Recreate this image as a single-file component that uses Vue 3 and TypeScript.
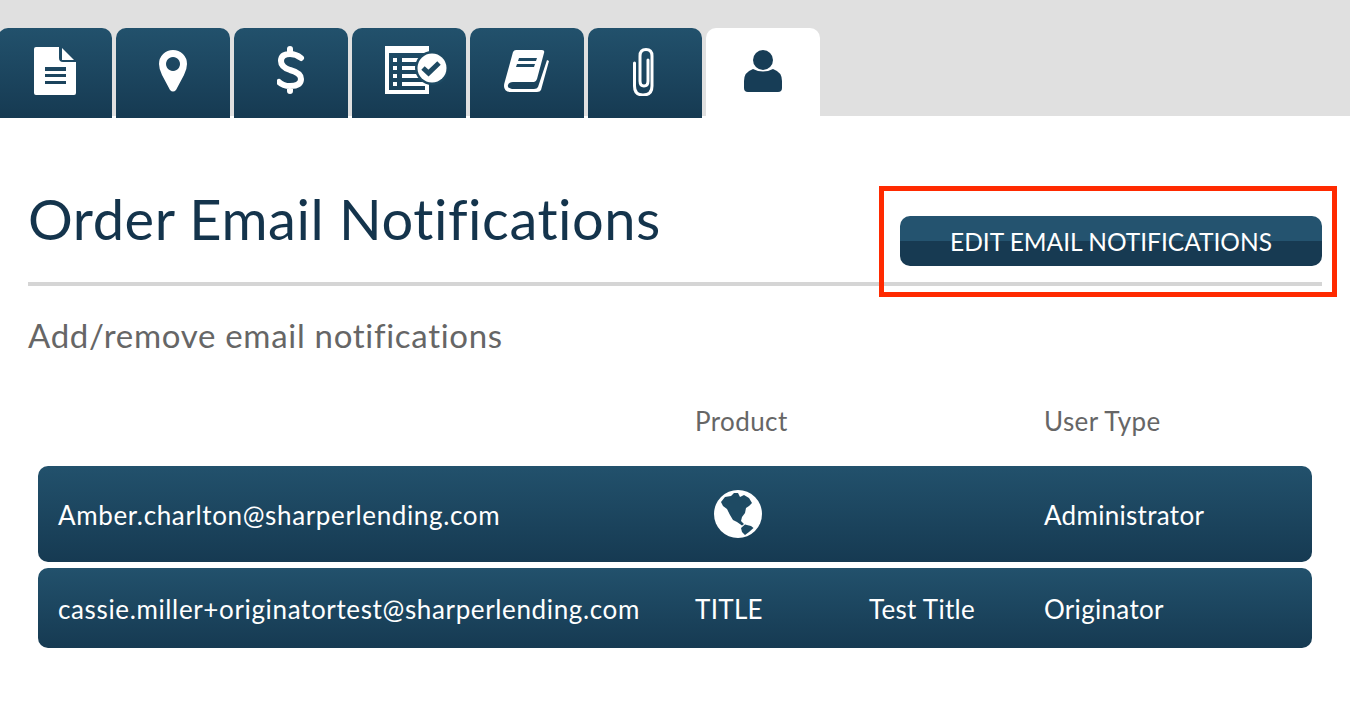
<template>
  <div class="page">
    <nav class="tabs">
      <div v-for="tab in tabs" :key="tab.name" class="tab" :class="[tab.name, { active: tab.name === 'user' }]">
        <svg v-if="tab.name === 'doc'" width="42" height="48" viewBox="0 0 42 48">
          <path fill="#fff" fill-rule="evenodd" d="M2 0h23v11q0 4 4 4h13v31q0 2-2 2H2q-2 0-2-2V2q0-2 2-2zM11 20v4h21v-4zM11 27v3h21v-3zM11 34v3h21v-3z" />
          <path fill="#fff" d="M28 1l12 12H28z" />
        </svg>
        <svg v-else-if="tab.name === 'pin'" width="28" height="42" viewBox="0 0 28 42">
          <path fill="#fff" fill-rule="evenodd" d="M14 0a14 14 0 0 1 14 14q0 5-3 11L17 40q-3 3-6 0L3 25Q0 19 0 14A14 14 0 0 1 14 0zM14 7a7 7 0 1 0 .01 0z" />
        </svg>
        <svg v-else-if="tab.name === 'dollar'" width="28" height="48" viewBox="0 0 28 48">
          <path fill="none" stroke="#fff" stroke-width="6" stroke-linecap="round" d="M24 12Q19 8 13 8 4 8 4 15 4 21 13 24 24 27 24 33 24 40 13 40 6 40 2 36M13 3v5M13 40v5" />
        </svg>
        <svg v-else-if="tab.name === 'list'" width="62" height="48" viewBox="0 0 62 48">
          <path fill="#fff" fill-rule="evenodd" d="M0 0h44v48H0zM4 7v37h36V7z" />
          <path fill="#fff" d="M8 12h4v4H8zM8 20h4v4H8zM8 28h4v4H8zM8 36h4v4H8zM17 12h23v4H17zM17 20h23v4H17zM17 28h23v4H17zM17 36h23v4H17z" />
          <circle cx="47" cy="22" r="17" fill="#1e4a63" />
          <circle cx="47" cy="22" r="14.500" fill="#fff" />
          <path fill="none" stroke="#1e4a63" stroke-width="5" d="M38 22l5.500 5L54 17" />
        </svg>
        <svg v-else-if="tab.name === 'book'" width="46" height="42" viewBox="0 0 46 42">
          <path fill="#fff" fill-rule="evenodd" d="M12 0h26q3 0 2 3l-7 26q-1 3-3 3H9q-4 0-5 3t4 4h22q3 0 4-2l9-27 2 1-8 29q-1 2-4 2H7q-7 0-7-6 0-2 1-5L9 2q1-2 3-2zM15 8l-1 3h18l1-3zM13 14l-1 3h18l1-3z" />
        </svg>
        <svg v-else-if="tab.name === 'clip'" width="21" height="48" viewBox="0 0 21 48">
          <path fill="none" stroke="#fff" stroke-width="3" stroke-linecap="round" d="M1.500 15V38Q1.500 47 10 47 19 47 19 38V8Q19 1.500 13 1.500 7 1.500 7 8V33Q7 38 11 38 15 38 15 33V12" />
        </svg>
        <svg v-else width="38" height="42" viewBox="0 0 38 42">
          <circle cx="19" cy="10" r="10" fill="#173d56" />
          <path fill="#173d56" d="M9 19q10 5 20 0 9 3 9 12v7q0 4-4 4H4q-4 0-4-4v-7q0-9 9-12z" />
        </svg>
      </div>
    </nav>

    <main class="content">
      <header class="heading">
        <h1>Order Email Notifications</h1>
        <button class="edit-btn">EDIT EMAIL NOTIFICATIONS</button>
      </header>
      <p class="subtitle">Add/remove email notifications</p>

      <div class="table">
        <div class="cols head">
          <span></span>
          <span>Product</span>
          <span></span>
          <span>User Type</span>
        </div>
        <div class="cols row tall">
          <span class="email">Amber.charlton@sharperlending.com</span>
          <span>
            <svg class="globe" width="48" height="48" viewBox="0 0 48 48">
              <circle cx="24" cy="24" r="24" fill="#fff" />
              <path fill="#1e4a63" d="M7 12L11 7 17 6 20 3 24 3 26 7 30 5 35 8 38 13 35 16 32 18 31 23 28 27 27 31 30 34 28 35.500 23 32 19 30 16 25 13 19 9 16ZM27 38L31 34.500 37 36 39.500 38 35 42 31 45 28 42Z" />
            </svg>
          </span>
          <span></span>
          <span>Administrator</span>
        </div>
        <div class="cols row">
          <span class="email">cassie.miller+originatortest@sharperlending.com</span>
          <span>TITLE</span>
          <span>Test Title</span>
          <span>Originator</span>
        </div>
      </div>
    </main>

    <div class="highlight"></div>
  </div>
</template>

<script setup lang="ts">
const tabs = [
  { name: 'doc' },
  { name: 'pin' },
  { name: 'dollar' },
  { name: 'list' },
  { name: 'book' },
  { name: 'clip' },
  { name: 'user' },
]
</script>

<style>
html,
body {
  margin: 0;
  background: #fff;
}
</style>

<style scoped>
.page {
  position: relative;
  width: 1350px;
  height: 720px;
  overflow: hidden;
  font-family: Lato, 'Noto Sans', sans-serif;
  font-variant-ligatures: none;
}

.tabs {
  display: flex;
  gap: 4px;
  height: 116px;
  box-sizing: border-box;
  padding: 28px 0 0;
  margin-left: -2px;
  background: #e0e0e0;
}

.tab {
  display: flex;
  justify-content: center;
  align-items: flex-start;
  padding-top: 19px;
  box-sizing: border-box;
  width: 114px;
  height: 90px;
  border-radius: 10px 10px 0 0;
  background: linear-gradient(#22516c, #163a52);
}

.tab.active {
  background: #fff;
  height: 88px;
  padding-top: 22px;
}

.tab.pin { padding-top: 22px; }
.tab.dollar { padding-top: 18px; }
.tab.list { padding-top: 18px; justify-content: flex-start; padding-left: 33px; }
.tab.book { padding-top: 22px; }
.tab.clip { padding-top: 20px; padding-right: 4px; }

.content {
  padding: 0 28px;
}

.heading {
  display: flex;
  justify-content: space-between;
  align-items: flex-end;
  height: 170px;
  box-sizing: border-box;
  padding-bottom: 16px;
  border-bottom: 4px solid #d5d5d5;
}

h1 {
  margin: 0 0 14px;
  font-size: 56px;
  line-height: 66px;
  font-weight: 400;
  letter-spacing: 0.55px;
  color: #14344c;
}

.edit-btn {
  width: 422px;
  height: 50px;
  padding: 0;
  border: none;
  border-radius: 10px;
  background: linear-gradient(#24536f 50%, #173a52 50%);
  color: #fff;
  font: inherit;
  font-size: 24.500px;
}

.subtitle {
  margin: 29px 0 0;
  font-size: 33px;
  line-height: 40px;
  letter-spacing: 0.7px;
  color: #666;
}

.table {
  margin: 48px 10px 0;
}

.cols {
  display: grid;
  grid-template-columns: 637px 174px 175px 1fr;
  align-items: center;
  padding-left: 20px;
}

.head {
  height: 36px;
  margin-bottom: 27px;
  font-size: 26px;
  letter-spacing: 0.4px;
  color: #666;
}

.row {
  height: 80px;
  margin-top: 6px;
  padding-top: 1px;
  box-sizing: border-box;
  border-radius: 10px;
  background: linear-gradient(#22516c, #163a52);
  color: #fff;
  font-size: 26px;
  letter-spacing: 0.3px;
}

.row .email {
  letter-spacing: 0.64px;
}

.row.tall {
  height: 96px;
  margin-top: 0;
}

.globe {
  display: block;
  margin-left: 19px;
  margin-top: -1px;
}

.highlight {
  position: absolute;
  left: 879px;
  top: 186px;
  width: 458px;
  height: 111px;
  box-sizing: border-box;
  border: 5px solid #ff2a00;
}
</style>
